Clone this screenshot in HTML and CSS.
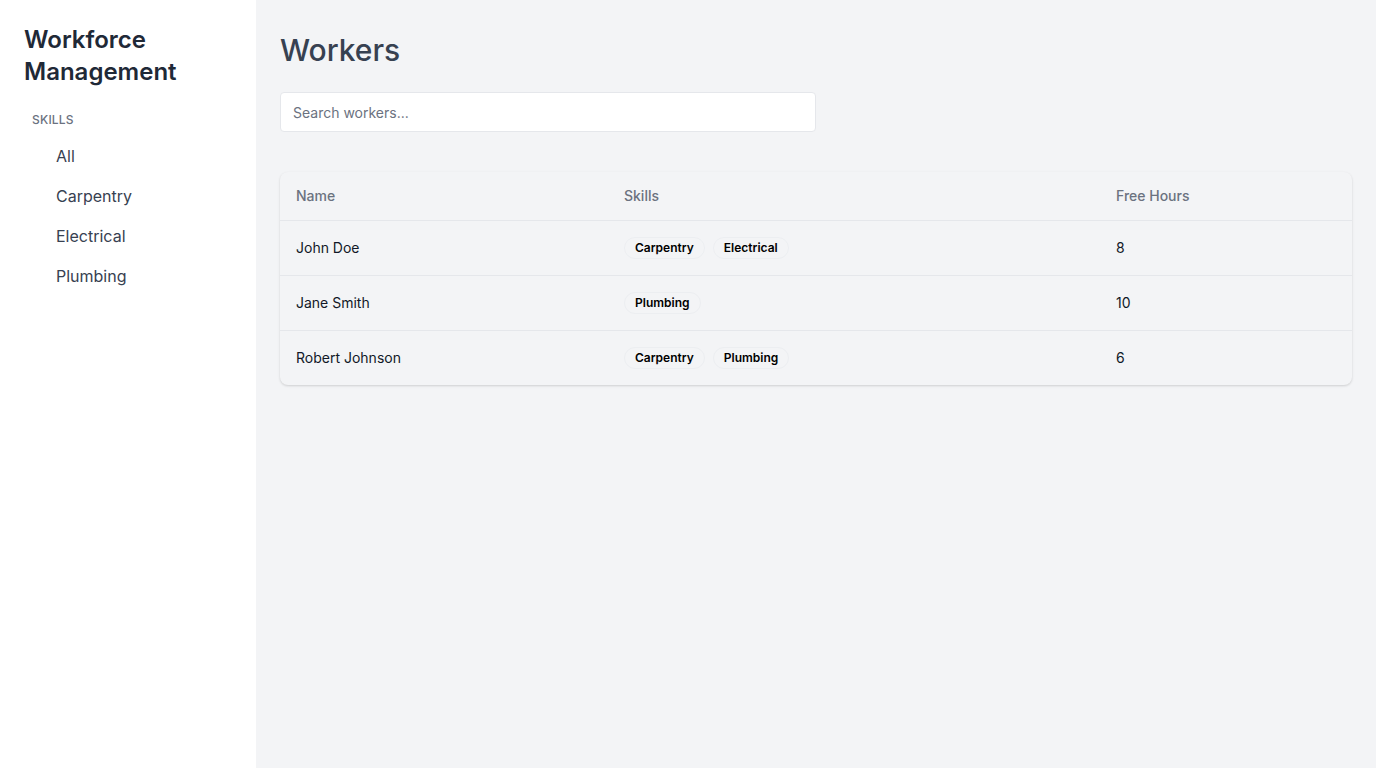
FILE: index.html
```
<!DOCTYPE html>
<html>
<head>
<meta charset="utf-8">
<link rel="stylesheet" href="styles.css">
</head>
<body>
<div class="app">
  <aside class="sidebar">
    <h1 class="brand">Workforce Management</h1>
    <div class="section-label">SKILLS</div>
    <ul class="nav">
      <li>All</li>
      <li>Carpentry</li>
      <li>Electrical</li>
      <li>Plumbing</li>
    </ul>
  </aside>
  <main class="main">
    <h2 class="page-title">Workers</h2>
    <input class="search" type="text" placeholder="Search workers...">
    <div class="card">
      <table class="table">
        <colgroup>
          <col class="c-name"><col class="c-skills"><col class="c-hours">
        </colgroup>
        <thead>
          <tr><th>Name</th><th>Skills</th><th>Free Hours</th></tr>
        </thead>
        <tbody>
          <tr><td>John Doe</td><td><span class="chip">Carpentry</span><span class="chip">Electrical</span></td><td>8</td></tr>
          <tr><td>Jane Smith</td><td><span class="chip">Plumbing</span></td><td>10</td></tr>
          <tr><td>Robert Johnson</td><td><span class="chip">Carpentry</span><span class="chip">Plumbing</span></td><td>6</td></tr>
        </tbody>
      </table>
    </div>
  </main>
</div>
</body>
</html>
```
FILE: styles.css
```
* { box-sizing: border-box; }
html, body { margin: 0; padding: 0; height: 100%; }
body {
  font-family: Inter, "Noto Sans", sans-serif;
  background: #f3f4f6;
  color: #111827;
}
.app { display: flex; min-height: 100vh; }
.sidebar {
  width: 256px;
  flex: 0 0 256px;
  background: #ffffff;
  padding: 24px;
}
.brand {
  margin: 0;
  font-size: 24px;
  line-height: 32px;
  font-weight: 600;
  color: #1f2937;
}
.section-label {
  margin-top: 24px;
  padding-left: 8px;
  font-size: 12px;
  line-height: 16px;
  font-weight: 500;
  color: #6b7280;
  letter-spacing: 0.2px;
}
.nav { list-style: none; margin: 8px 0 0; padding: 0; }
.nav li {
  padding: 8px 32px;
  font-size: 16px;
  line-height: 24px;
  color: #374151;
}
.main { flex: 1; padding: 32px 24px 24px; }
.page-title {
  margin: 0 0 24px;
  font-size: 30px;
  line-height: 36px;
  font-weight: 500;
  color: #374151;
}
.search {
  display: block;
  width: 536px;
  height: 40px;
  padding: 0 12px;
  border: 1px solid #e5e7eb;
  border-radius: 4px;
  background: #fff;
  font-family: inherit;
  font-size: 14px;
  color: #111827;
  outline: none;
}
.search::placeholder { color: #6b7280; }
.card {
  margin-top: 40px;
  border-radius: 8px;
  background: #f3f4f6;
  box-shadow: 0 1px 3px rgba(0,0,0,0.1), 0 1px 2px rgba(0,0,0,0.06);
  overflow: hidden;
}
.table { width: 100%; border-collapse: collapse; table-layout: fixed; }
.c-name { width: 328px; }
.c-skills { width: 492px; }
.table th {
  text-align: left;
  height: 48px;
  padding: 0 16px;
  font-size: 14px;
  font-weight: 500;
  color: #6b7280;
  border-bottom: 1px solid #e5e7eb;
}
.table td {
  height: 55px;
  padding: 0 16px;
  font-size: 14px;
  color: #111827;
  border-bottom: 1px solid #e5e7eb;
}
.table tbody tr:last-child td { border-bottom: none; }
.chip {
  display: inline-block;
  padding: 3px 10px;
  margin-right: 8px;
  border-radius: 999px;
  border: 1px solid #eceef1;
  background: #f3f4f6;
  font-size: 12px;
  line-height: 14px;
  font-weight: 600;
  color: #000;
}
```
